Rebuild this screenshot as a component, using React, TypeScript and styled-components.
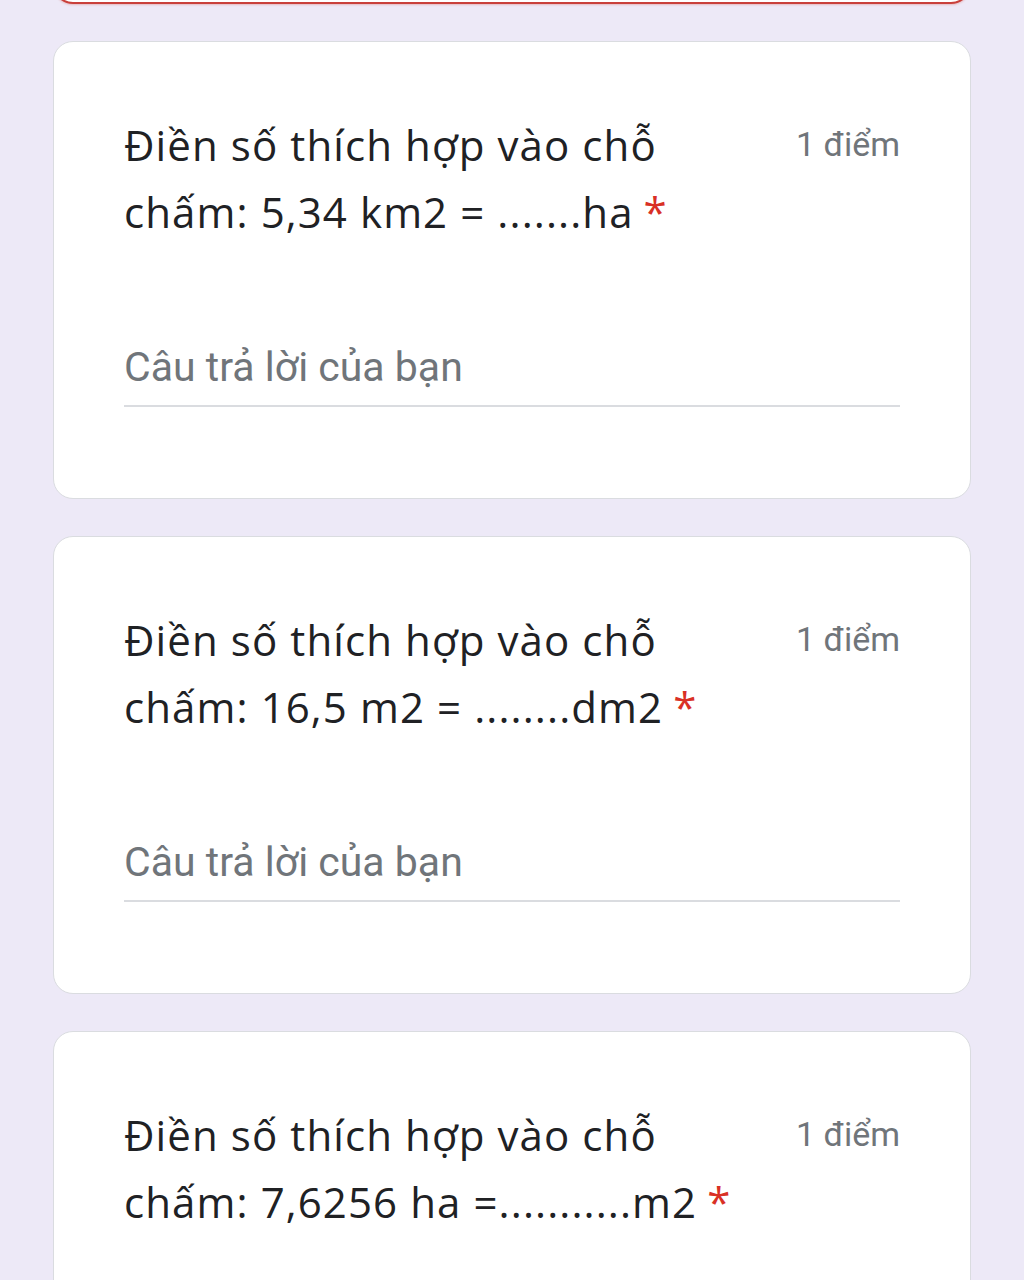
import React from "react";
import styled, { createGlobalStyle } from "styled-components";

const Global = createGlobalStyle`
  html, body { margin: 0; padding: 0; background: #ede9f7; }
  body { overflow: hidden; }
`;

const Page = styled.div`
  width: 1024px;
  height: 1280px;
  overflow: hidden;
  background: #ede9f7;
  display: flex;
  flex-direction: column;
  align-items: center;
`;

const List = styled.div`
  margin-top: -94px;
  width: 918px;
  display: flex;
  flex-direction: column;
  gap: 37px;
`;

const ErrorCard = styled.div`
  height: 98px;
  box-sizing: border-box;
  background: #fff;
  border: 2px solid #c9403b;
  border-radius: 20px;
  box-shadow: 0 1px 2px rgba(217, 48, 37, 0.25);
`;

const Card = styled.div`
  box-sizing: border-box;
  height: 458px;
  background: #fff;
  border: 1.5px solid #dadce0;
  border-radius: 20px;
  padding: 69px 70px 0 70px;
  display: flex;
  flex-direction: column;
`;

const Header = styled.div`
  display: flex;
  justify-content: space-between;
  align-items: flex-start;
`;

const Title = styled.div`
  max-width: 620px;
  font-family: "Open Sans", "Noto Sans", sans-serif;
  font-size: 42px;
  line-height: 67px;
  color: #202124;
  letter-spacing: 1.1px;
`;

const Star = styled.span`
  color: #d93025;
  margin-left: 10px;
`;

const Points = styled.div`
  font-family: Roboto, "Noto Sans", sans-serif;
  font-size: 34px;
  line-height: 67px;
  color: #70757a;
  white-space: nowrap;
`;

const Answer = styled.div`
  margin-top: 97px;
  font-family: Roboto, "Noto Sans", sans-serif;
  font-size: 41px;
  line-height: 50px;
  color: #70757a;
  padding-bottom: 13px;
  border-bottom: 2px solid #dadce0;
`;

const questions = [
  "chấm: 5,34 km2 = .......ha",
  "chấm: 16,5 m2 = ........dm2",
  "chấm: 7,6256 ha =...........m2",
];

export default function App() {
  return (
    <>
      <Global />
      <Page>
        <List>
          <ErrorCard />
          {questions.map((q, i) => (
            <Card key={i}>
              <Header>
                <Title>
                  Điền số thích hợp vào chỗ {q}
                  <Star>*</Star>
                </Title>
                <Points>1 điểm</Points>
              </Header>
              <Answer>Câu trả lời của bạn</Answer>
            </Card>
          ))}
        </List>
      </Page>
    </>
  );
}
